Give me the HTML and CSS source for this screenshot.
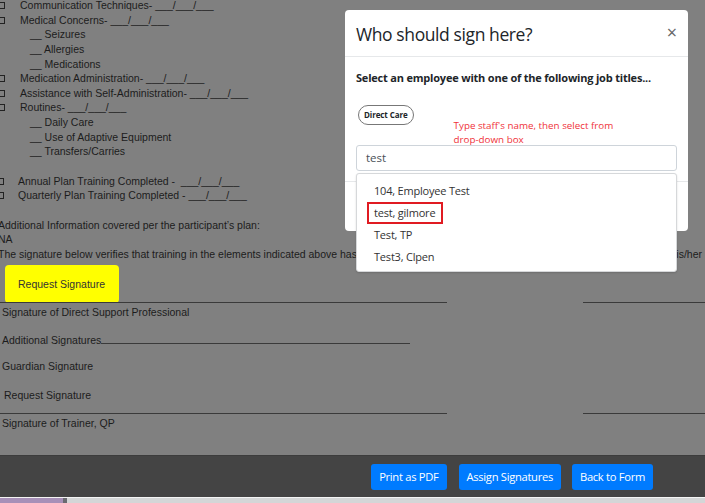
FILE: index.html
```html
<!DOCTYPE html>
<html>
<head>
<meta charset="utf-8">
<link rel="stylesheet" href="styles.css">
</head>
<body>
<div class="page">
  <div class="doc">
    <p class="ck"><span class="box"></span>Communication Techniques- ___/___/___</p>
    <p class="ck"><span class="box"></span>Medical Concerns- ___/___/___</p>
    <p class="sub">__ Seizures</p>
    <p class="sub">__ Allergies</p>
    <p class="sub">__ Medications</p>
    <p class="ck"><span class="box"></span>Medication Administration- ___/___/___</p>
    <p class="ck"><span class="box"></span>Assistance with Self-Administration- ___/___/___</p>
    <p class="ck"><span class="box"></span>Routines- ___/___/___</p>
    <p class="sub">__ Daily Care</p>
    <p class="sub">__ Use of Adaptive Equipment</p>
    <p class="sub">__ Transfers/Carries</p>
    <p class="blank"></p>
    <p class="ck2"><span class="box"></span>Annual Plan Training Completed - &nbsp;___/___/___</p>
    <p class="ck2"><span class="box"></span>Quarterly Plan Training Completed - ___/___/___</p>
    <p class="blank"></p>
    <p class="plain">Additional Information covered per the participant’s plan:</p>
    <p class="plain">NA</p>
    <p class="plain wide"><span class="a">The signature below verifies that training in the elements indicated above has</span><span class="b">understands his/her</span></p>
    <button class="req">Request Signature</button>
    <div class="sigline"><span class="l"></span><span class="r"></span></div>
    <p class="sig">Signature of Direct Support Professional</p>
    <p class="sig addl">Additional Signatures<span class="under"></span></p>
    <p class="sig guard">Guardian Signature</p>
    <p class="sig reqtxt">Request Signature</p>
    <div class="sigline second"><span class="l"></span><span class="r"></span></div>
    <p class="sig">Signature of Trainer, QP</p>
  </div>
  <footer class="bar">
    <button class="btn">Print as PDF</button>
    <button class="btn">Assign Signatures</button>
    <button class="btn">Back to Form</button>
  </footer>
  <div class="strip"><span class="purple"></span><span class="thumb"></span></div>
</div>

<div class="modal">
  <div class="m-head">
    <h2>Who should sign here?</h2>
    <span class="close">×</span>
  </div>
  <div class="m-body">
    <p class="lead">Select an employee with one of the following job titles...</p>
    <div class="tags">
      <span class="pill">Direct Care</span>
      <span class="note">Type staff's name, then select from<br>drop-down box</span>
    </div>
    <div class="input">test</div>
  </div>
  <div class="m-foot"></div>
  <ul class="dropdown">
    <li>104, Employee Test</li>
    <li><span class="mark">test, gilmore</span></li>
    <li>Test, TP</li>
    <li>Test3, Clpen</li>
  </ul>
</div>
</body>
</html>
```
FILE: styles.css
```css
* { box-sizing: border-box; }
html, body { margin: 0; padding: 0; }
body {
  width: 705px;
  height: 503px;
  overflow: hidden;
  background: #808080;
  position: relative;
}
.page {
  display: flex;
  flex-direction: column;
  height: 503px;
}
.doc {
  flex: 1;
  overflow: hidden;
  margin-left: -2px;
  margin-top: -2px;
  font-family: "Liberation Sans", Arial, sans-serif;
  font-size: 10.5px;
  color: #1c1c1c;
}
.doc p {
  margin: 0;
  line-height: 14.65px;
  height: 14.65px;
  white-space: nowrap;
}
.box {
  display: inline-block;
  width: 7px;
  height: 7px;
  border: 1px solid #222;
}
.ck .box { margin-right: 15px; }
.ck2 .box { margin-left: -1px; margin-right: 14px; }
.sub { padding-left: 32px; }
.doc .wide {
  display: flex;
  justify-content: space-between;
  width: 707px;
  padding-right: 3px;
  overflow: hidden;
}
.wide .a { flex: none; }
.wide .b { flex: none; }
.req {
  display: block;
  margin: 3px 0 0 7px;
  width: 114px;
  height: 38px;
  background: #ffff00;
  border: none;
  border-radius: 4px;
  font-family: "Liberation Sans", Arial, sans-serif;
  font-size: 10.5px;
  color: #333;
  text-align: left;
  padding: 0 0 0 13px;
}
.sigline {
  display: flex;
  justify-content: space-between;
  margin-top: -1px;
  height: 2px;
}
.sigline .l, .sigline .r {
  display: block;
  border-top: 1.5px solid #3a3a3a;
}
.sigline .l { width: 449px; }
.sigline .r { width: 122px; }
.doc .sig { padding-left: 4px; margin-top: 1px; }
.doc .addl {
  margin-top: 14px;
  display: flex;
  width: 412px;
}
.under {
  flex: 1;
  border-bottom: 1px solid #3a3a3a;
  height: 11px;
}
.doc .guard { margin-top: 11px; }
.doc .reqtxt { margin-top: 15px; padding-left: 6px; }
.sigline.second { margin-top: 10px; }

.bar {
  height: 42px;
  flex: none;
  background: #444444;
  border-top: 1px solid #3c3c3c;
  display: flex;
  justify-content: flex-end;
  align-items: center;
  gap: 11px;
  padding-right: 52px;
}
.btn {
  height: 26px;
  background: #007bff;
  color: #fff;
  border: none;
  border-radius: 3px;
  font-family: "Open Sans", sans-serif;
  font-size: 11.2px;
  padding: 0 8px;
  letter-spacing: -0.3px;
}
.btn:first-child { margin-right: 1px; }
.strip {
  flex: none;
  height: 6px;
  background: #d4d6d7;
  border-top: 1px solid #f4f4f4;
  display: flex;
}
.strip .purple { width: 63px; background: #a790b8; }
.strip .thumb { width: 4px; background: #6a6a70; }

.modal {
  position: absolute;
  left: 345px;
  top: 10px;
  width: 343px;
  height: 221px;
  background: #fff;
  border-radius: 4px;
  font-family: "Open Sans", sans-serif;
  color: #212529;
}
.m-head {
  height: 47px;
  border-bottom: 1px solid #e6e8ea;
  display: flex;
  align-items: center;
  justify-content: space-between;
  padding: 2px 11px 0 11px;
}
.m-head h2 {
  margin: 0;
  font-size: 17.5px;
  font-weight: 400;
  letter-spacing: -0.4px;
}
.close {
  font-size: 18px;
  color: #666;
  line-height: 1;
  margin-top: -4px;
}
.m-body {
  height: 125px;
  padding: 13px 11px 0 11px;
  border-bottom: 1px solid #e6e8ea;
}
.lead {
  margin: 0;
  font-size: 11px;
  font-weight: 700;
  line-height: 16px;
  letter-spacing: -0.2px;
}
.tags {
  display: flex;
  align-items: flex-start;
  height: 40px;
  margin-top: 19px;
}
.pill {
  margin-left: 2px;
  height: 20px;
  padding: 0 5px;
  border: 1px solid #777;
  border-radius: 10px;
  font-size: 8px;
  font-weight: 700;
  line-height: 18px;
  letter-spacing: -0.1px;
}
.note {
  margin-left: 40px;
  margin-top: 14px;
  color: #f0323a;
  font-size: 9.8px;
  line-height: 14px;
}
.input {
  height: 26px;
  border: 1px solid #ced4da;
  border-radius: 3px;
  font-size: 11.5px;
  line-height: 24px;
  padding-left: 9px;
  color: #495057;
}
.dropdown {
  position: absolute;
  left: 11px;
  top: 163px;
  width: 321px;
  height: 99px;
  margin: 0;
  padding: 6px 0 0 0;
  list-style: none;
  background: #fff;
  border: 1px solid #d6d8da;
  border-radius: 3px;
  box-shadow: 0 1px 2px rgba(0,0,0,0.15);
}
.dropdown li {
  height: 22px;
  line-height: 22px;
  padding-left: 17px;
  font-size: 11px;
  letter-spacing: -0.2px;
  color: #333;
}
.mark {
  display: inline-block;
  border: 2px solid #e01b22;
  margin-left: -7px;
  padding: 0 6px 0 5px;
  line-height: 18px;
}
```
